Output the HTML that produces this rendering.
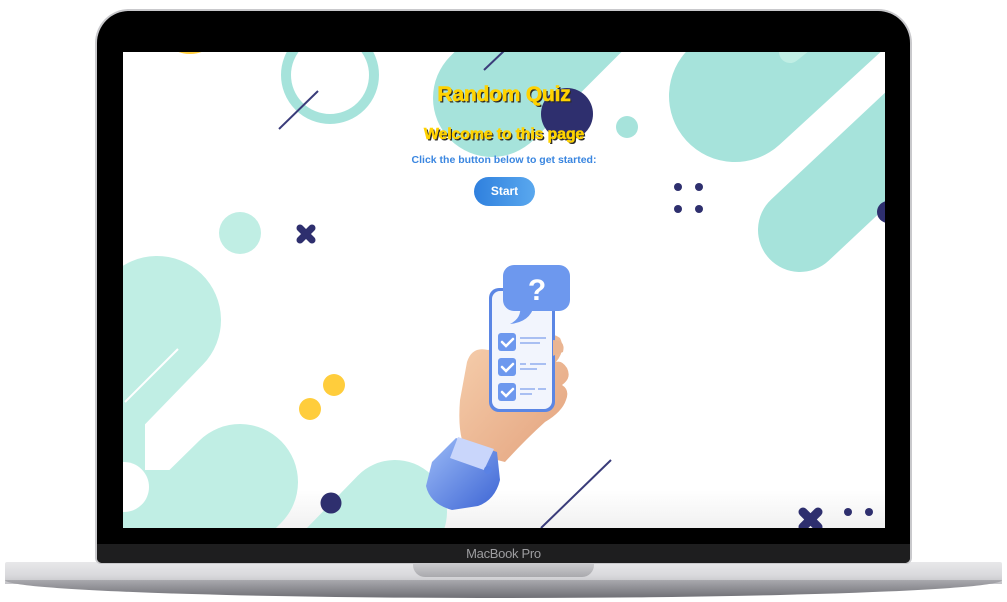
<!DOCTYPE html>
<html><head><meta charset="utf-8"><style>
html,body{margin:0;padding:0;background:#fff;width:1007px;height:602px;overflow:hidden;position:relative;font-family:"Liberation Sans",sans-serif}
.abs{position:absolute}
.t{position:absolute;left:0;width:762px;text-align:center;font-weight:bold}
</style></head><body>
<!-- base -->
<div class="abs" style="left:5px;top:562px;width:997px;height:22px;background:linear-gradient(#e8e8ea,#d9d9dc 60%,#c4c4c8);border-radius:2px 2px 0 0"></div>
<div class="abs" style="left:5px;top:580px;width:997px;height:18px;background:linear-gradient(#a9a9ae,#6f6f75);border-radius:0 0 50% 50% / 0 0 100% 100%"></div>
<div class="abs" style="left:413px;top:562px;width:181px;height:15px;background:linear-gradient(#cfcfd2,#a9a9ad);border-radius:0 0 12px 12px"></div>
<!-- lid -->
<div class="abs" style="left:95px;top:9px;width:817px;height:555px;background:#c9c9cc;border-radius:34px 34px 6px 6px"></div>
<div class="abs" style="left:97px;top:11px;width:813px;height:552px;background:#000;border-radius:32px 32px 5px 5px;overflow:hidden">
  <div class="abs" style="left:0;top:533px;width:813px;height:19px;background:#1e1e1f"></div>
  <div class="abs" style="left:0;top:535px;width:813px;text-align:center;color:#9d9da0;font-size:13px;letter-spacing:-0.3px">MacBook Pro</div>
</div>
<!-- screen -->
<div class="abs" style="left:123px;top:52px;width:762px;height:476px;overflow:hidden;background:linear-gradient(#fff 92%,#f1f1f1)">
<svg width="762" height="476" viewBox="123 52 762 476" style="position:absolute;left:0;top:0">
  <circle cx="190" cy="20" r="34" fill="#ffcd3c"/>
  <circle cx="330" cy="75" r="44" fill="none" stroke="#a6e3db" stroke-width="10"/>
  <line x1="279" y1="129" x2="318" y2="91" stroke="#3a3c7a" stroke-width="2"/>
  <line x1="492" y1="98" x2="640" y2="-50" stroke="#a6e3db" stroke-width="118" stroke-linecap="round"/>
  <line x1="484" y1="70" x2="505" y2="50" stroke="#3a3c7a" stroke-width="2"/>
  <circle cx="567" cy="114" r="26" fill="#2e2f6e"/>
  <circle cx="627" cy="127" r="11" fill="#a6e3db"/>
  <line x1="735" y1="96" x2="905" y2="-60" stroke="#a6e3db" stroke-width="132" stroke-linecap="round"/>
  <line x1="790" y1="52" x2="830" y2="20" stroke="#c0eee4" stroke-width="22" stroke-linecap="round"/>
  <line x1="870" y1="148" x2="900" y2="120" stroke="#fff" stroke-width="2"/>
  <line x1="800" y1="230" x2="960" y2="80" stroke="#a6e3db" stroke-width="84" stroke-linecap="round"/>
  <circle cx="888" cy="212" r="11" fill="#2e2f6e"/>
  <g fill="#2e2f6e"><circle cx="678" cy="187" r="4"/><circle cx="699" cy="187" r="4"/><circle cx="678" cy="209" r="4"/><circle cx="699" cy="209" r="4"/></g>
  <circle cx="240" cy="233" r="21" fill="#c0eee4"/>
  <g stroke="#2e2f6e" stroke-width="7" stroke-linecap="round"><line x1="300" y1="228" x2="312" y2="240"/><line x1="312" y1="228" x2="300" y2="240"/></g>
  <!-- left blob -->
  <g fill="#c0eee4" stroke="#c0eee4" stroke-linecap="round">
    <line x1="157" y1="320" x2="60" y2="420" stroke-width="128"/>
    <rect x="100" y="380" width="45" height="150" stroke-width="0"/>
    <line x1="240" y1="482" x2="130" y2="590" stroke-width="116"/>
    <rect x="123" y="470" width="120" height="60" stroke-width="0"/>
    <line x1="395" y1="512" x2="290" y2="620" stroke-width="104"/>
  </g>
  <circle cx="124" cy="487" r="25" fill="#fff"/>
  <line x1="125" y1="402" x2="178" y2="349" stroke="#fff" stroke-width="2"/>
  <circle cx="334" cy="385" r="11" fill="#ffcd3c"/>
  <circle cx="310" cy="409" r="11" fill="#ffcd3c"/>
  <circle cx="331" cy="503" r="10.5" fill="#2e2f6e"/>
  <line x1="541" y1="528" x2="611" y2="460" stroke="#3a3c7a" stroke-width="2"/>
  <g stroke="#2e2f6e" stroke-width="9" stroke-linecap="round"><line x1="803" y1="512" x2="818" y2="527"/><line x1="818" y1="512" x2="803" y2="527"/></g>
  <circle cx="848" cy="512" r="4" fill="#2e2f6e"/><circle cx="869" cy="512" r="4" fill="#2e2f6e"/>
  <!-- hand & phone -->
  <defs>
    <linearGradient id="sk" x1="0" y1="0" x2="1" y2="1"><stop offset="0" stop-color="#f6cfad"/><stop offset="1" stop-color="#e3a27d"/></linearGradient>
    <linearGradient id="cf" x1="0" y1="0" x2="1" y2="1"><stop offset="0" stop-color="#9dbcf7"/><stop offset="1" stop-color="#3c64d4"/></linearGradient>
  </defs>
  <path d="M488 350 Q472 346 467 362 L460 400 Q458 425 462 440 L458 450 L505 462 Q525 440 545 422 Q562 412 566 400 Q570 390 562 385 Q572 378 567 368 Q562 360 556 362 Q566 350 560 338 Q552 332 547 338 Z" fill="url(#sk)"/>
  <path d="M432 462 L456 438 L497 452 L500 480 Q495 500 478 506 L452 510 Q430 504 426 486 Z" fill="url(#cf)"/>
  <path d="M458 437 L494 449 L484 470 L450 458 Z" fill="#c9d6fb"/>
  <circle cx="488" cy="470" r="4" fill="#5a82e4"/>
  <rect x="489" y="288" width="66" height="124" rx="10" fill="#5b86e4"/>
  <rect x="492" y="291" width="60" height="118" rx="8" fill="#f2f5fd"/>
  <path d="M553 340 Q566 340 563 352 Q552 356 553 356 Z" fill="#eab592"/>
  <g fill="#6d98ee">
    <rect x="498" y="333" width="18" height="18" rx="3"/><rect x="498" y="358" width="18" height="18" rx="3"/><rect x="498" y="383" width="18" height="18" rx="3"/>
  </g>
  <g stroke="#fff" stroke-width="2.5" fill="none" stroke-linecap="round"><path d="M502 342 l4 4 l7-7"/><path d="M502 367 l4 4 l7-7"/><path d="M502 392 l4 4 l7-7"/></g>
  <g stroke="#a9bff2" stroke-width="2"><line x1="520" y1="338" x2="546" y2="338"/><line x1="520" y1="343" x2="540" y2="343"/><line x1="520" y1="364" x2="526" y2="364"/><line x1="530" y1="364" x2="546" y2="364"/><line x1="520" y1="369" x2="537" y2="369"/><line x1="520" y1="389" x2="535" y2="389"/><line x1="538" y1="389" x2="546" y2="389"/><line x1="520" y1="394" x2="532" y2="394"/></g>
  <rect x="503" y="265" width="67" height="46" rx="11" fill="#6d98ee"/>
  <path d="M520 306 Q522 318 510 324 Q530 322 534 306 Z" fill="#6d98ee"/>
  <text x="537" y="300" text-anchor="middle" font-family="Liberation Sans,sans-serif" font-weight="bold" font-size="30" fill="#fff">?</text>
</svg>
<div class="t" style="top:31px;font-size:21px;color:#ffd200;-webkit-text-stroke:0.6px #ffd200;text-shadow:1.5px 1.5px 0 #2a2a2a;letter-spacing:-0.2px">Random Quiz</div>
<div class="t" style="top:74px;font-size:16px;color:#ffd200;-webkit-text-stroke:0.5px #ffd200;text-shadow:1.5px 1.5px 0 #2a2a2a;letter-spacing:-0.2px">Welcome to this page</div>
<div class="t" style="top:102px;font-size:10.5px;color:#3a86e0">Click the button below to get started:</div>
<div class="abs" style="left:351px;top:125px;width:61px;height:29px;border-radius:15px;background:linear-gradient(90deg,#2f80de,#5aa8ee);color:#fff;font-weight:bold;font-size:12px;text-align:center;line-height:29px">Start</div>
</div>
</body></html>
